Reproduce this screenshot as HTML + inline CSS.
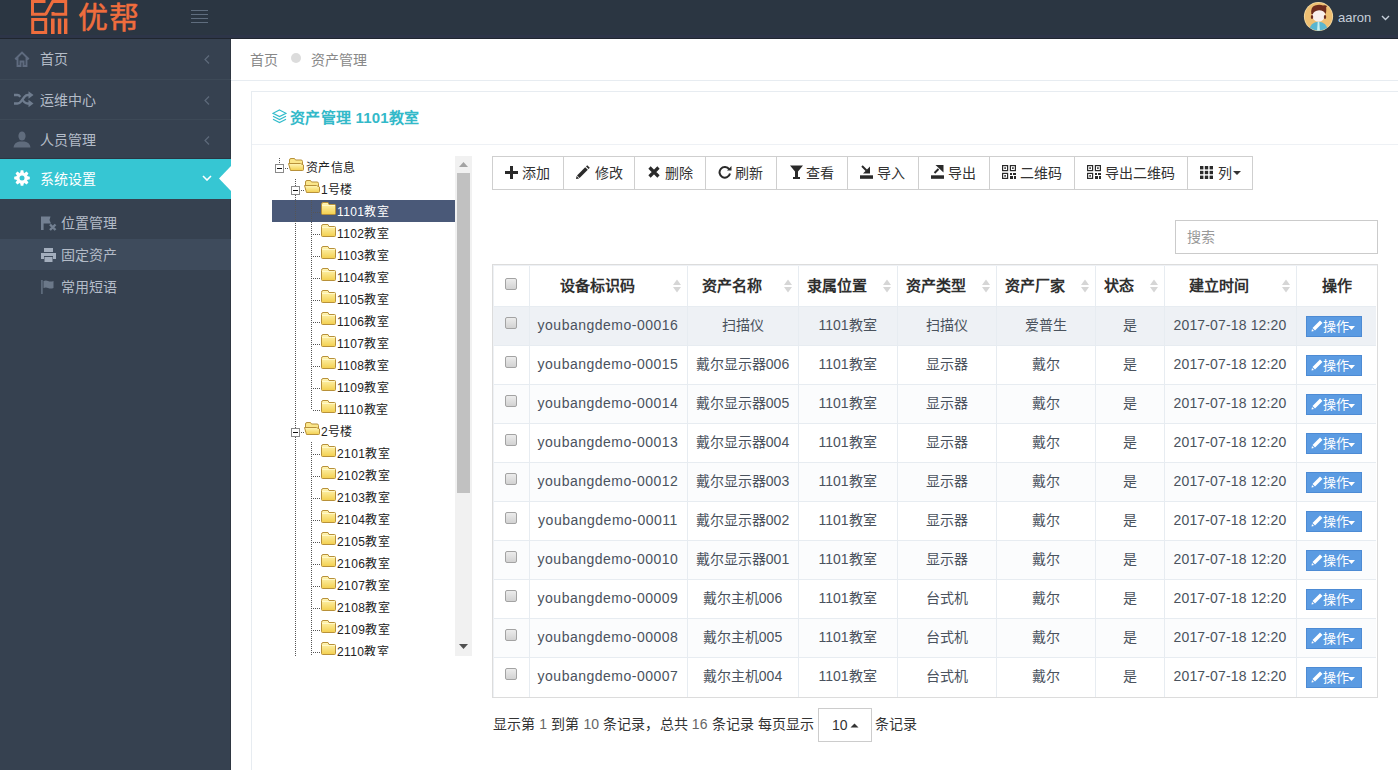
<!DOCTYPE html>
<html lang="zh-CN">
<head>
<meta charset="utf-8">
<style>
*{box-sizing:border-box;margin:0;padding:0}
html,body{width:1398px;height:770px;overflow:hidden;background:#fff}
body{font-family:"Liberation Sans",sans-serif;font-size:14px;font-weight:350;color:#333;position:relative}
.a{position:absolute}
#hdr{left:0;top:0;width:1398px;height:39px;background:linear-gradient(to bottom,#2b3642 0,#2b3642 35px,#2d3548 35px,#2d3548 38px,#20262f 38px)}
#side{left:0;top:39px;width:231px;height:731px;background:#364150}
.mi{position:absolute;left:0;width:231px;height:40px;border-top:1px solid #3d4957;color:#b4bcc8;font-size:14px;line-height:40px}
.mi .t{position:absolute;left:40px;top:0}
.mi svg{position:absolute;left:14px;top:12px}
.mi .arr{position:absolute;left:203px;top:16px}
.sub{position:absolute;left:0;width:231px;height:32px;color:#b4bcc8;line-height:32px;font-size:14px}
.sub .t{position:absolute;left:61px;top:0}
.sub svg{position:absolute;left:41px;top:9px}
/* content */
.bc{color:#888;font-size:14px;line-height:20px}
.tree{font-size:12px;color:#222;line-height:22px;font-weight:400}
.tn{position:absolute;height:22px;white-space:nowrap}
.tb{position:absolute;top:156px;height:34px;border:1px solid #ccc;border-left:none;background:#fff;font-size:14px;color:#333;line-height:32px;white-space:nowrap}
.tb svg{position:absolute;top:9px}
.tb .t{position:absolute;top:0}
table{border-collapse:collapse;table-layout:fixed;font-size:14px;color:#3b4350}
td,th{border:1px solid #e7ecf1;text-align:center;white-space:nowrap;overflow:hidden}
th{height:41px;font-weight:bold;color:#222;position:relative}
td{height:39px}
.cb{display:inline-block;width:12px;height:12px;border:1px solid #b3b3b3;border-radius:2px;background:linear-gradient(#f0f0f0,#dcdcdc)}
.op{position:absolute;width:56px;height:21px;background:#5a9ae2;border:1px solid #4a87cf;color:#fff;font-size:13px;line-height:19px}
</style>
</head>
<body>
<div id="hdr" class="a">
  <!-- logo -->
  <svg class="a" style="left:29px;top:0" width="42" height="36" viewBox="29 0 42 36">
    <g fill="none" stroke="#ef6d3d" stroke-width="3">
      <path d="M45.5 1.5H32.5V14.3H46"/>
      <path d="M45.5 14.8L53.5 0"/>
      <path d="M53 1.5H65.7V14.3H53V12"/>
      <rect x="32.7" y="19.5" width="13" height="13"/>
    </g>
    <g fill="#ef6d3d">
      <rect x="51" y="18.5" width="3.6" height="15.5"/>
      <rect x="57.8" y="18.5" width="3.5" height="15.5"/>
      <rect x="64" y="18.5" width="3.4" height="15.5"/>
    </g>
  </svg>
  <div class="a" style="left:78px;top:-1px;font-size:30px;line-height:38px;color:#ef6d3d;letter-spacing:1px;font-weight:400;-webkit-text-stroke:0.5px #ef6d3d">优帮</div>
  <div class="a" style="left:191px;top:10px;width:17px;height:1px;background:#5f6d7e"></div>
  <div class="a" style="left:191px;top:14px;width:17px;height:1px;background:#5f6d7e"></div>
  <div class="a" style="left:191px;top:18px;width:17px;height:1px;background:#5f6d7e"></div>
  <div class="a" style="left:191px;top:22px;width:17px;height:1px;background:#5f6d7e"></div>
  <!-- avatar -->
  <svg class="a" style="left:1303px;top:1px" width="31" height="31" viewBox="0 0 31 31"><defs><clipPath id="cc"><circle cx="15.5" cy="15.5" r="14"/></clipPath></defs><circle cx="15.5" cy="15.5" r="14.6" fill="#f3dba6"/><circle cx="15.5" cy="15.5" r="13.8" fill="#eebf72"/><g clip-path="url(#cc)"><path d="M6 31Q6.5 21.5 15.5 20.5Q24.5 21.5 25 31Z" fill="#5ab6d0"/><path d="M14.7 21H16.3L17 31H14Z" fill="#c9f1f2"/><ellipse cx="15.5" cy="13.8" rx="6.6" ry="7" fill="#f9efed"/><ellipse cx="9" cy="16" rx="1.2" ry="1.9" fill="#6e2c1d"/><ellipse cx="22" cy="16" rx="1.2" ry="1.9" fill="#6e2c1d"/><path d="M8.3 13Q7.5 6 12 4.6Q16 3.2 20 4.4Q23 3.8 24 5.2Q22.6 6.2 23.3 8Q23.4 11 22.6 13Q21 9.2 16 9.2Q11 9.6 9.6 13.5Z" fill="#6e2c1d"/></g></svg>
  <div class="a" style="left:1338px;top:9px;font-size:13px;line-height:17px;color:#c6cfda">aaron</div>
  <svg class="a" style="left:1381px;top:15px" width="9" height="6" viewBox="0 0 9 6"><path d="M1 1L4.5 4.5L8 1" fill="none" stroke="#c6cfda" stroke-width="1.4"/></svg>
</div>

<div id="side" class="a">
  <div class="a" style="left:230px;top:0;width:1px;height:731px;background:#2f3742"></div>
  <div class="mi" style="top:0;border-top:none">
    <svg width="16" height="16" viewBox="0 0 16 16"><path d="M1.2 8.2L8 1.5L14.8 8.2M3.5 6.5V15H6.5V10.5H9.5V15H12.5V6.5" fill="none" stroke="#5f6b7f" stroke-width="1.9"/></svg>
    <div class="t">首页</div>
    <svg class="arr" width="6" height="9" viewBox="0 0 6 9" style="left:204px;top:16px"><path d="M5 0.5L1 4.5L5 8.5" fill="none" stroke="#5e6a7b" stroke-width="1.2"/></svg>
  </div>
  <div class="mi" style="top:40px">
    <svg width="21" height="17" viewBox="0 0 21 17" style="top:11px;left:13px"><g fill="none" stroke="#6f7c8e" stroke-width="2.3"><path d="M1 4H4.5Q6 4 7.3 5.8"/><path d="M1 12.5H4.5Q6.5 12.5 8 10.5L11.5 5.8Q13 4 15 4H16.5"/><path d="M9.6 8.8L11 10.8Q12.5 12.5 14.5 12.5H16.5"/></g><g fill="#6f7c8e"><path d="M15.5 0.3L20.5 4L15.5 7.7Z"/><path d="M15.5 8.8L20.5 12.5L15.5 16.2Z"/></g></svg>
    <div class="t">运维中心</div>
    <svg class="arr" width="6" height="9" viewBox="0 0 6 9" style="left:204px;top:16px"><path d="M5 0.5L1 4.5L5 8.5" fill="none" stroke="#5e6a7b" stroke-width="1.2"/></svg>
  </div>
  <div class="mi" style="top:80px">
    <svg width="18" height="17" viewBox="0 0 18 17" style="left:13px;top:11px"><ellipse cx="9" cy="5" rx="3.6" ry="4.6" fill="#606c7d"/><path d="M0.5 16.5Q1 11.5 6.5 10.5H11.5Q17 11.5 17.5 16.5Z" fill="#606c7d"/></svg>
    <div class="t">人员管理</div>
    <svg class="arr" width="6" height="9" viewBox="0 0 6 9" style="left:204px;top:16px"><path d="M5 0.5L1 4.5L5 8.5" fill="none" stroke="#5e6a7b" stroke-width="1.2"/></svg>
  </div>
  <div class="mi" style="top:119px;height:41px;line-height:40px;background:#36c6d3;color:#fff;border-top:1px solid #2b3643">
    <svg width="16" height="16" viewBox="0 0 16 16" style="top:11px"><g fill="#fff"><circle cx="8" cy="8" r="5.6"/><path d="M6.7 0.2H9.3L9.9 3.2H6.1Z" transform="rotate(0 8 8)"/><path d="M6.7 0.2H9.3L9.9 3.2H6.1Z" transform="rotate(45 8 8)"/><path d="M6.7 0.2H9.3L9.9 3.2H6.1Z" transform="rotate(90 8 8)"/><path d="M6.7 0.2H9.3L9.9 3.2H6.1Z" transform="rotate(135 8 8)"/><path d="M6.7 0.2H9.3L9.9 3.2H6.1Z" transform="rotate(180 8 8)"/><path d="M6.7 0.2H9.3L9.9 3.2H6.1Z" transform="rotate(225 8 8)"/><path d="M6.7 0.2H9.3L9.9 3.2H6.1Z" transform="rotate(270 8 8)"/><path d="M6.7 0.2H9.3L9.9 3.2H6.1Z" transform="rotate(315 8 8)"/></g><circle cx="8" cy="8" r="2.5" fill="#36c6d3"/></svg>
    <div class="t">系统设置</div>
    <svg class="arr" width="10" height="6" viewBox="0 0 10 6" style="left:202px;top:16px"><path d="M1 1L5 5L9 1" fill="none" stroke="#fff" stroke-width="1.6"/></svg>
    <svg class="a" style="left:219px;top:7px" width="12" height="25" viewBox="0 0 12 25"><path d="M12 0L0 12.5L12 25Z" fill="#fff"/></svg>
  </div>
  <div class="sub" style="top:168px">
    <svg width="16" height="15" viewBox="0 0 16 15" style="top:9px"><path d="M0 0.5H2.6V14H0ZM2.6 0.5H9.5L8.5 4L10 7.5H2.6Z" fill="#738092"/><path d="M9 8.5L14.5 14M14.5 8.5L9 14" stroke="#738092" stroke-width="2.4"/></svg>
    <div class="t">位置管理</div>
  </div>
  <div class="sub" style="top:200px;height:31px;background:#3e4b5c">
    <svg width="15" height="14" viewBox="0 0 15 14" style="top:9px"><path d="M3 0H12V4H3Z" fill="#a3aebd"/><path d="M0 5H15V11H12V8H3V11H0Z" fill="#a3aebd"/><path d="M3.5 9H11.5V14H3.5Z" fill="#a3aebd"/></svg>
    <div class="t">固定资产</div>
  </div>
  <div class="sub" style="top:232px">
    <svg width="14" height="14" viewBox="0 0 14 14" style="top:9px"><rect x="0" y="0" width="1.8" height="14" fill="#5d6a7b"/><path d="M2.5 1Q5 0 7 1Q9.5 2 12.5 1V8Q9.5 9 7 8Q5 7 2.5 8Z" fill="#6b7889"/></svg>
    <div class="t">常用短语</div>
  </div>
</div>

<!-- content area -->
<div class="a" style="left:231px;top:39px;width:1167px;height:731px;background:#fff"></div>
<div class="a bc" style="left:250px;top:50px">首页</div>
<div class="a" style="left:291px;top:53px;width:10px;height:10px;border-radius:50%;background:#dcdcdc"></div>
<div class="a bc" style="left:311px;top:50px">资产管理</div>
<div class="a" style="left:231px;top:80px;width:1167px;height:1px;background:#e7ecf1"></div>

<!-- portlet -->
<div class="a" style="left:251px;top:91px;width:1160px;height:700px;border:1px solid #e7ecf1"></div>
<div class="a" style="left:252px;top:144px;width:1146px;height:1px;background:#eef1f5"></div>
<svg class="a" style="left:272px;top:109px" width="15" height="15" viewBox="0 0 15 15"><g fill="none" stroke="#33bccb" stroke-width="1.2"><path d="M7.5 1L14 4.3L7.5 7.6L1 4.3Z"/><path d="M1 7.3L7.5 10.6L14 7.3"/><path d="M1 10.3L7.5 13.6L14 10.3"/></g></svg>
<div class="a" style="left:290px;top:106.5px;font-size:15px;line-height:22px;font-weight:bold;color:#33b9c9;letter-spacing:0.25px">资产管理 1101教室</div>

<!-- tree -->
<svg width="0" height="0" style="position:absolute"><defs><linearGradient id="fg" x1="0" y1="0" x2="0" y2="1"><stop offset="0" stop-color="#fff6b8"/><stop offset="1" stop-color="#f3cf4e"/></linearGradient><symbol id="fc" viewBox="0 0 15 13"><path d="M0.5 2.5V11.5Q0.5 12.5 1.5 12.5H13.5Q14.5 12.5 14.5 11.5V3.5Q14.5 2.5 13.5 2.5H8L7 0.5H2Q0.5 0.5 0.5 2.5Z" fill="url(#fg)" stroke="#b8913a" stroke-width="1"/><path d="M1 3.5H14" stroke="#fff8c8" stroke-width="1"/></symbol><symbol id="fo" viewBox="0 0 16 13"><path d="M1.5 10V2Q1.5 0.5 3 0.5H6.5L7.5 2H13Q14.5 2 14.5 3.5V11" fill="#fbe68a" stroke="#b8913a" stroke-width="1"/><path d="M0.5 5.5H12.5L15.5 7V11.5Q15.5 12.5 14.5 12.5H2.5Z" fill="url(#fg)" stroke="#b8913a" stroke-width="1"/></symbol></defs></svg>
<div class="a" style="left:272px;top:200px;width:183px;height:22px;background:#4a5978"></div>
<div class="a" style="left:279px;top:158px;width:1px;height:6px;background:repeating-linear-gradient(to bottom,#555 0 1px,transparent 1px 2px)"></div>
<div class="a" style="left:295px;top:179px;width:1px;height:477px;background:repeating-linear-gradient(to bottom,#555 0 1px,transparent 1px 2px)"></div>
<div class="a" style="left:311px;top:200px;width:1px;height:210px;background:repeating-linear-gradient(to bottom,#555 0 1px,transparent 1px 2px)"></div>
<div class="a" style="left:311px;top:442px;width:1px;height:214px;background:repeating-linear-gradient(to bottom,#555 0 1px,transparent 1px 2px)"></div>
<div class="a" style="left:275px;top:164px;width:9px;height:9px;border:1px solid #8a8a8a;background:#fff"></div>
<div class="a" style="left:277px;top:168px;width:5px;height:1px;background:#111"></div>
<div class="a" style="left:285px;top:168px;width:4px;height:1px;background:repeating-linear-gradient(to right,#555 0 1px,transparent 1px 2px)"></div>
<svg class="a" style="left:288px;top:158px" width="16" height="13"><use href="#fo"/></svg>
<div class="a tree" style="left:306px;top:157px;color:#222;white-space:nowrap;letter-spacing:0.4px">资产信息</div>
<div class="a" style="left:291px;top:186px;width:9px;height:9px;border:1px solid #8a8a8a;background:#fff"></div>
<div class="a" style="left:293px;top:190px;width:5px;height:1px;background:#111"></div>
<div class="a" style="left:301px;top:190px;width:4px;height:1px;background:repeating-linear-gradient(to right,#555 0 1px,transparent 1px 2px)"></div>
<svg class="a" style="left:304px;top:180px" width="16" height="13"><use href="#fo"/></svg>
<div class="a tree" style="left:321px;top:179px;color:#222;white-space:nowrap;letter-spacing:0.4px">1号楼</div>
<div class="a" style="left:313px;top:212px;width:8px;height:1px;background:repeating-linear-gradient(to right,#555 0 1px,transparent 1px 2px)"></div>
<svg class="a" style="left:321px;top:202px" width="15" height="13"><use href="#fc"/></svg>
<div class="a tree" style="left:337px;top:201px;color:#fff;white-space:nowrap;letter-spacing:0.4px">1101教室</div>
<div class="a" style="left:313px;top:234px;width:8px;height:1px;background:repeating-linear-gradient(to right,#555 0 1px,transparent 1px 2px)"></div>
<svg class="a" style="left:321px;top:224px" width="15" height="13"><use href="#fc"/></svg>
<div class="a tree" style="left:337px;top:223px;color:#222;white-space:nowrap;letter-spacing:0.4px">1102教室</div>
<div class="a" style="left:313px;top:256px;width:8px;height:1px;background:repeating-linear-gradient(to right,#555 0 1px,transparent 1px 2px)"></div>
<svg class="a" style="left:321px;top:246px" width="15" height="13"><use href="#fc"/></svg>
<div class="a tree" style="left:337px;top:245px;color:#222;white-space:nowrap;letter-spacing:0.4px">1103教室</div>
<div class="a" style="left:313px;top:278px;width:8px;height:1px;background:repeating-linear-gradient(to right,#555 0 1px,transparent 1px 2px)"></div>
<svg class="a" style="left:321px;top:268px" width="15" height="13"><use href="#fc"/></svg>
<div class="a tree" style="left:337px;top:267px;color:#222;white-space:nowrap;letter-spacing:0.4px">1104教室</div>
<div class="a" style="left:313px;top:300px;width:8px;height:1px;background:repeating-linear-gradient(to right,#555 0 1px,transparent 1px 2px)"></div>
<svg class="a" style="left:321px;top:290px" width="15" height="13"><use href="#fc"/></svg>
<div class="a tree" style="left:337px;top:289px;color:#222;white-space:nowrap;letter-spacing:0.4px">1105教室</div>
<div class="a" style="left:313px;top:322px;width:8px;height:1px;background:repeating-linear-gradient(to right,#555 0 1px,transparent 1px 2px)"></div>
<svg class="a" style="left:321px;top:312px" width="15" height="13"><use href="#fc"/></svg>
<div class="a tree" style="left:337px;top:311px;color:#222;white-space:nowrap;letter-spacing:0.4px">1106教室</div>
<div class="a" style="left:313px;top:344px;width:8px;height:1px;background:repeating-linear-gradient(to right,#555 0 1px,transparent 1px 2px)"></div>
<svg class="a" style="left:321px;top:334px" width="15" height="13"><use href="#fc"/></svg>
<div class="a tree" style="left:337px;top:333px;color:#222;white-space:nowrap;letter-spacing:0.4px">1107教室</div>
<div class="a" style="left:313px;top:366px;width:8px;height:1px;background:repeating-linear-gradient(to right,#555 0 1px,transparent 1px 2px)"></div>
<svg class="a" style="left:321px;top:356px" width="15" height="13"><use href="#fc"/></svg>
<div class="a tree" style="left:337px;top:355px;color:#222;white-space:nowrap;letter-spacing:0.4px">1108教室</div>
<div class="a" style="left:313px;top:388px;width:8px;height:1px;background:repeating-linear-gradient(to right,#555 0 1px,transparent 1px 2px)"></div>
<svg class="a" style="left:321px;top:378px" width="15" height="13"><use href="#fc"/></svg>
<div class="a tree" style="left:337px;top:377px;color:#222;white-space:nowrap;letter-spacing:0.4px">1109教室</div>
<div class="a" style="left:313px;top:410px;width:8px;height:1px;background:repeating-linear-gradient(to right,#555 0 1px,transparent 1px 2px)"></div>
<svg class="a" style="left:321px;top:400px" width="15" height="13"><use href="#fc"/></svg>
<div class="a tree" style="left:337px;top:399px;color:#222;white-space:nowrap;letter-spacing:0.4px">1110教室</div>
<div class="a" style="left:291px;top:428px;width:9px;height:9px;border:1px solid #8a8a8a;background:#fff"></div>
<div class="a" style="left:293px;top:432px;width:5px;height:1px;background:#111"></div>
<div class="a" style="left:301px;top:432px;width:4px;height:1px;background:repeating-linear-gradient(to right,#555 0 1px,transparent 1px 2px)"></div>
<svg class="a" style="left:304px;top:422px" width="16" height="13"><use href="#fo"/></svg>
<div class="a tree" style="left:321px;top:421px;color:#222;white-space:nowrap;letter-spacing:0.4px">2号楼</div>
<div class="a" style="left:313px;top:454px;width:8px;height:1px;background:repeating-linear-gradient(to right,#555 0 1px,transparent 1px 2px)"></div>
<svg class="a" style="left:321px;top:444px" width="15" height="13"><use href="#fc"/></svg>
<div class="a tree" style="left:337px;top:443px;color:#222;white-space:nowrap;letter-spacing:0.4px">2101教室</div>
<div class="a" style="left:313px;top:476px;width:8px;height:1px;background:repeating-linear-gradient(to right,#555 0 1px,transparent 1px 2px)"></div>
<svg class="a" style="left:321px;top:466px" width="15" height="13"><use href="#fc"/></svg>
<div class="a tree" style="left:337px;top:465px;color:#222;white-space:nowrap;letter-spacing:0.4px">2102教室</div>
<div class="a" style="left:313px;top:498px;width:8px;height:1px;background:repeating-linear-gradient(to right,#555 0 1px,transparent 1px 2px)"></div>
<svg class="a" style="left:321px;top:488px" width="15" height="13"><use href="#fc"/></svg>
<div class="a tree" style="left:337px;top:487px;color:#222;white-space:nowrap;letter-spacing:0.4px">2103教室</div>
<div class="a" style="left:313px;top:520px;width:8px;height:1px;background:repeating-linear-gradient(to right,#555 0 1px,transparent 1px 2px)"></div>
<svg class="a" style="left:321px;top:510px" width="15" height="13"><use href="#fc"/></svg>
<div class="a tree" style="left:337px;top:509px;color:#222;white-space:nowrap;letter-spacing:0.4px">2104教室</div>
<div class="a" style="left:313px;top:542px;width:8px;height:1px;background:repeating-linear-gradient(to right,#555 0 1px,transparent 1px 2px)"></div>
<svg class="a" style="left:321px;top:532px" width="15" height="13"><use href="#fc"/></svg>
<div class="a tree" style="left:337px;top:531px;color:#222;white-space:nowrap;letter-spacing:0.4px">2105教室</div>
<div class="a" style="left:313px;top:564px;width:8px;height:1px;background:repeating-linear-gradient(to right,#555 0 1px,transparent 1px 2px)"></div>
<svg class="a" style="left:321px;top:554px" width="15" height="13"><use href="#fc"/></svg>
<div class="a tree" style="left:337px;top:553px;color:#222;white-space:nowrap;letter-spacing:0.4px">2106教室</div>
<div class="a" style="left:313px;top:586px;width:8px;height:1px;background:repeating-linear-gradient(to right,#555 0 1px,transparent 1px 2px)"></div>
<svg class="a" style="left:321px;top:576px" width="15" height="13"><use href="#fc"/></svg>
<div class="a tree" style="left:337px;top:575px;color:#222;white-space:nowrap;letter-spacing:0.4px">2107教室</div>
<div class="a" style="left:313px;top:608px;width:8px;height:1px;background:repeating-linear-gradient(to right,#555 0 1px,transparent 1px 2px)"></div>
<svg class="a" style="left:321px;top:598px" width="15" height="13"><use href="#fc"/></svg>
<div class="a tree" style="left:337px;top:597px;color:#222;white-space:nowrap;letter-spacing:0.4px">2108教室</div>
<div class="a" style="left:313px;top:630px;width:8px;height:1px;background:repeating-linear-gradient(to right,#555 0 1px,transparent 1px 2px)"></div>
<svg class="a" style="left:321px;top:620px" width="15" height="13"><use href="#fc"/></svg>
<div class="a tree" style="left:337px;top:619px;color:#222;white-space:nowrap;letter-spacing:0.4px">2109教室</div>
<div class="a" style="left:313px;top:652px;width:8px;height:1px;background:repeating-linear-gradient(to right,#555 0 1px,transparent 1px 2px)"></div>
<svg class="a" style="left:321px;top:642px" width="15" height="13"><use href="#fc"/></svg>
<div class="a tree" style="left:337px;top:641px;color:#222;white-space:nowrap;letter-spacing:0.4px">2110教室</div>
<div class="a" style="left:455px;top:156px;width:17px;height:500px;background:#f1f1f1"></div>
<div class="a" style="left:457px;top:173px;width:13px;height:320px;background:#c1c1c1"></div>
<svg class="a" style="left:459px;top:162px" width="9" height="5"><path d="M0 5L4.5 0L9 5Z" fill="#a3a3a3"/></svg>
<svg class="a" style="left:459px;top:644px" width="9" height="5"><path d="M0 0L4.5 5L9 0Z" fill="#505050"/></svg>
<div class="a" style="left:260px;top:656px;width:220px;height:40px;background:#fff"></div>

<!-- toolbar -->
<div class="a" style="left:492px;top:156px;width:761px;height:34px;border:1px solid #cfcfcf"></div>
<div class="a" style="left:563px;top:157px;width:1px;height:32px;background:#cfcfcf"></div>
<svg class="a" style="left:505px;top:166px" width="13" height="13" viewBox="0 0 13 13"><path d="M5 0H8V5H13V8H8V13H5V8H0V5H5Z" fill="#2a2a2a"/></svg>
<div class="a" style="left:522px;top:163px;font-size:14px;line-height:20px;color:#333;white-space:nowrap">添加</div>
<div class="a" style="left:634px;top:157px;width:1px;height:32px;background:#cfcfcf"></div>
<svg class="a" style="left:576px;top:165px" width="14" height="14" viewBox="0 0 14 14"><path d="M11.2 0.2L13.8 2.8L12.6 4L10 1.4Z" fill="#2a2a2a"/><path d="M9.2 2.2L11.8 4.8L3.6 13L1 10.4Z" fill="#2a2a2a"/><path d="M0.6 10.9L3.1 13.4L0 14Z" fill="#2a2a2a"/></svg>
<div class="a" style="left:595px;top:163px;font-size:14px;line-height:20px;color:#333;white-space:nowrap">修改</div>
<div class="a" style="left:705px;top:157px;width:1px;height:32px;background:#cfcfcf"></div>
<svg class="a" style="left:648px;top:166px" width="12" height="12" viewBox="0 0 12 12"><path d="M1.5 1.5L10.5 10.5M10.5 1.5L1.5 10.5" stroke="#2a2a2a" stroke-width="3.2"/></svg>
<div class="a" style="left:665px;top:163px;font-size:14px;line-height:20px;color:#333;white-space:nowrap">删除</div>
<div class="a" style="left:776px;top:157px;width:1px;height:32px;background:#cfcfcf"></div>
<svg class="a" style="left:718px;top:165px" width="14" height="14" viewBox="0 0 14 14"><path d="M11.2 4.3A5.3 5.3 0 1 0 12 8.5" fill="none" stroke="#2a2a2a" stroke-width="2"/><path d="M9 5.5H13.5V1Z" fill="#2a2a2a"/></svg>
<div class="a" style="left:735px;top:163px;font-size:14px;line-height:20px;color:#333;white-space:nowrap">刷新</div>
<div class="a" style="left:847px;top:157px;width:1px;height:32px;background:#cfcfcf"></div>
<svg class="a" style="left:790px;top:165px" width="13" height="14" viewBox="0 0 13 14"><path d="M0 0.5H13L8 6.5V12H5V6.5Z" fill="#2a2a2a"/><rect x="3" y="12" width="7" height="2" fill="#2a2a2a"/></svg>
<div class="a" style="left:806px;top:163px;font-size:14px;line-height:20px;color:#333;white-space:nowrap">查看</div>
<div class="a" style="left:918px;top:157px;width:1px;height:32px;background:#cfcfcf"></div>
<svg class="a" style="left:860px;top:164px" width="14" height="16" viewBox="0 0 14 16"><path d="M0 11.3H13V14.8H0Z" fill="#2a2a2a"/><path d="M2 2L6.5 6.5" stroke="#2a2a2a" stroke-width="2"/><path d="M10 2.5V9.5H3Z" fill="#2a2a2a"/></svg>
<div class="a" style="left:877px;top:163px;font-size:14px;line-height:20px;color:#333;white-space:nowrap">导入</div>
<div class="a" style="left:989px;top:157px;width:1px;height:32px;background:#cfcfcf"></div>
<svg class="a" style="left:931px;top:164px" width="14" height="16" viewBox="0 0 14 16"><path d="M0 11.3H13V14.8H0Z" fill="#2a2a2a"/><path d="M3.5 9L7.5 5" stroke="#2a2a2a" stroke-width="2"/><path d="M4.5 1H12.5V8.5Z" fill="#2a2a2a"/></svg>
<div class="a" style="left:948px;top:163px;font-size:14px;line-height:20px;color:#333;white-space:nowrap">导出</div>
<div class="a" style="left:1074px;top:157px;width:1px;height:32px;background:#cfcfcf"></div>
<svg class="a" style="left:1002px;top:165px" width="14" height="14" viewBox="0 0 14 14"><g fill="none" stroke="#2a2a2a" stroke-width="1.2"><rect x="0.6" y="0.6" width="5" height="5"/><rect x="8.4" y="0.6" width="5" height="5"/><rect x="0.6" y="8.4" width="5" height="5"/></g><g fill="#2a2a2a"><rect x="2.3" y="2.3" width="1.6" height="1.6"/><rect x="10.1" y="2.3" width="1.6" height="1.6"/><rect x="2.3" y="10.1" width="1.6" height="1.6"/><rect x="8" y="8" width="2" height="2"/><rect x="11" y="8" width="3" height="2"/><rect x="8" y="11" width="3" height="3"/><rect x="12" y="11" width="2" height="3"/></g></svg>
<div class="a" style="left:1020px;top:163px;font-size:14px;line-height:20px;color:#333;white-space:nowrap">二维码</div>
<div class="a" style="left:1187px;top:157px;width:1px;height:32px;background:#cfcfcf"></div>
<svg class="a" style="left:1087px;top:165px" width="14" height="14" viewBox="0 0 14 14"><g fill="none" stroke="#2a2a2a" stroke-width="1.2"><rect x="0.6" y="0.6" width="5" height="5"/><rect x="8.4" y="0.6" width="5" height="5"/><rect x="0.6" y="8.4" width="5" height="5"/></g><g fill="#2a2a2a"><rect x="2.3" y="2.3" width="1.6" height="1.6"/><rect x="10.1" y="2.3" width="1.6" height="1.6"/><rect x="2.3" y="10.1" width="1.6" height="1.6"/><rect x="8" y="8" width="2" height="2"/><rect x="11" y="8" width="3" height="2"/><rect x="8" y="11" width="3" height="3"/><rect x="12" y="11" width="2" height="3"/></g></svg>
<div class="a" style="left:1105px;top:163px;font-size:14px;line-height:20px;color:#333;white-space:nowrap">导出二维码</div>
<svg class="a" style="left:1200px;top:166px" width="13" height="13" viewBox="0 0 13 13"><g fill="#2a2a2a"><rect x="0" y="0" width="3.4" height="3.4"/><rect x="4.8" y="0" width="3.4" height="3.4"/><rect x="9.6" y="0" width="3.4" height="3.4"/><rect x="0" y="4.8" width="3.4" height="3.4"/><rect x="4.8" y="4.8" width="3.4" height="3.4"/><rect x="9.6" y="4.8" width="3.4" height="3.4"/><rect x="0" y="9.6" width="3.4" height="3.4"/><rect x="4.8" y="9.6" width="3.4" height="3.4"/><rect x="9.6" y="9.6" width="3.4" height="3.4"/></g></svg>
<div class="a" style="left:1218px;top:163px;font-size:14px;line-height:20px;color:#333;white-space:nowrap">列</div>
<svg class="a" style="left:1233px;top:171px" width="8" height="4" viewBox="0 0 8 4"><path d="M0 0H8L4 4Z" fill="#333"/></svg>

<!-- search -->
<div class="a" style="left:1175px;top:220px;width:203px;height:34px;border:1px solid #cbcbcb;font-size:14px;color:#999;line-height:32px;padding-left:11px">搜索</div>

<!-- table -->
<div class="a" style="left:493px;top:306px;width:883px;height:39px;background:#eef1f5"></div>
<div class="a" style="left:493px;top:345px;width:883px;height:39px;background:#ffffff"></div>
<div class="a" style="left:493px;top:384px;width:883px;height:39px;background:#fbfcfd"></div>
<div class="a" style="left:493px;top:423px;width:883px;height:39px;background:#ffffff"></div>
<div class="a" style="left:493px;top:462px;width:883px;height:39px;background:#fbfcfd"></div>
<div class="a" style="left:493px;top:501px;width:883px;height:39px;background:#ffffff"></div>
<div class="a" style="left:493px;top:540px;width:883px;height:39px;background:#fbfcfd"></div>
<div class="a" style="left:493px;top:579px;width:883px;height:39px;background:#ffffff"></div>
<div class="a" style="left:493px;top:618px;width:883px;height:39px;background:#fbfcfd"></div>
<div class="a" style="left:493px;top:657px;width:883px;height:39px;background:#ffffff"></div>
<div class="a" style="left:493px;top:306px;width:883px;height:1px;background:#e7ecf1"></div>
<div class="a" style="left:493px;top:345px;width:883px;height:1px;background:#e7ecf1"></div>
<div class="a" style="left:493px;top:384px;width:883px;height:1px;background:#e7ecf1"></div>
<div class="a" style="left:493px;top:423px;width:883px;height:1px;background:#e7ecf1"></div>
<div class="a" style="left:493px;top:462px;width:883px;height:1px;background:#e7ecf1"></div>
<div class="a" style="left:493px;top:501px;width:883px;height:1px;background:#e7ecf1"></div>
<div class="a" style="left:493px;top:540px;width:883px;height:1px;background:#e7ecf1"></div>
<div class="a" style="left:493px;top:579px;width:883px;height:1px;background:#e7ecf1"></div>
<div class="a" style="left:493px;top:618px;width:883px;height:1px;background:#e7ecf1"></div>
<div class="a" style="left:493px;top:657px;width:883px;height:1px;background:#e7ecf1"></div>
<div class="a" style="left:529px;top:265px;width:1px;height:432px;background:#e7ecf1"></div>
<div class="a" style="left:687px;top:265px;width:1px;height:432px;background:#e7ecf1"></div>
<div class="a" style="left:798px;top:265px;width:1px;height:432px;background:#e7ecf1"></div>
<div class="a" style="left:897px;top:265px;width:1px;height:432px;background:#e7ecf1"></div>
<div class="a" style="left:996px;top:265px;width:1px;height:432px;background:#e7ecf1"></div>
<div class="a" style="left:1095px;top:265px;width:1px;height:432px;background:#e7ecf1"></div>
<div class="a" style="left:1164px;top:265px;width:1px;height:432px;background:#e7ecf1"></div>
<div class="a" style="left:1296px;top:265px;width:1px;height:432px;background:#e7ecf1"></div>
<div class="a" style="left:492px;top:264px;width:886px;height:434px;border:1px solid #dcdcdc"></div>
<div class="a" style="left:493px;top:265px;width:884px;height:432px;border:1px solid #eef1f5;border-right:none;border-bottom:none"></div>
<div class="a" style="left:505px;top:278px;width:12px;height:12px;border:1px solid #a3a3a3;border-radius:2px;background:linear-gradient(#ececec,#d2d2d2)"></div>
<svg class="a" style="left:673px;top:279px" width="8" height="14" viewBox="0 0 8 14"><path d="M0 6L4 0.5L8 6Z M0 8L4 13.5L8 8Z" fill="#d6d6d6"/></svg>
<div class="a" style="left:497.0px;top:276px;width:200px;text-align:center;font-size:15px;line-height:20px;font-weight:bold;color:#2f2f2f">设备标识码</div>
<svg class="a" style="left:784px;top:279px" width="8" height="14" viewBox="0 0 8 14"><path d="M0 6L4 0.5L8 6Z M0 8L4 13.5L8 8Z" fill="#d6d6d6"/></svg>
<div class="a" style="left:631.5px;top:276px;width:200px;text-align:center;font-size:15px;line-height:20px;font-weight:bold;color:#2f2f2f">资产名称</div>
<svg class="a" style="left:883px;top:279px" width="8" height="14" viewBox="0 0 8 14"><path d="M0 6L4 0.5L8 6Z M0 8L4 13.5L8 8Z" fill="#d6d6d6"/></svg>
<div class="a" style="left:736.5px;top:276px;width:200px;text-align:center;font-size:15px;line-height:20px;font-weight:bold;color:#2f2f2f">隶属位置</div>
<svg class="a" style="left:982px;top:279px" width="8" height="14" viewBox="0 0 8 14"><path d="M0 6L4 0.5L8 6Z M0 8L4 13.5L8 8Z" fill="#d6d6d6"/></svg>
<div class="a" style="left:835.5px;top:276px;width:200px;text-align:center;font-size:15px;line-height:20px;font-weight:bold;color:#2f2f2f">资产类型</div>
<svg class="a" style="left:1081px;top:279px" width="8" height="14" viewBox="0 0 8 14"><path d="M0 6L4 0.5L8 6Z M0 8L4 13.5L8 8Z" fill="#d6d6d6"/></svg>
<div class="a" style="left:934.5px;top:276px;width:200px;text-align:center;font-size:15px;line-height:20px;font-weight:bold;color:#2f2f2f">资产厂家</div>
<svg class="a" style="left:1150px;top:279px" width="8" height="14" viewBox="0 0 8 14"><path d="M0 6L4 0.5L8 6Z M0 8L4 13.5L8 8Z" fill="#d6d6d6"/></svg>
<div class="a" style="left:1018.5px;top:276px;width:200px;text-align:center;font-size:15px;line-height:20px;font-weight:bold;color:#2f2f2f">状态</div>
<svg class="a" style="left:1282px;top:279px" width="8" height="14" viewBox="0 0 8 14"><path d="M0 6L4 0.5L8 6Z M0 8L4 13.5L8 8Z" fill="#d6d6d6"/></svg>
<div class="a" style="left:1119.0px;top:276px;width:200px;text-align:center;font-size:15px;line-height:20px;font-weight:bold;color:#2f2f2f">建立时间</div>
<div class="a" style="left:1237.0px;top:276px;width:200px;text-align:center;font-size:15px;line-height:20px;font-weight:bold;color:#2f2f2f">操作</div>
<div class="a" style="left:505px;top:317px;width:12px;height:12px;border:1px solid #a3a3a3;border-radius:2px;background:linear-gradient(#ececec,#d2d2d2)"></div>
<div class="a" style="left:508.0px;top:315px;width:200px;text-align:center;font-size:14px;line-height:20px;color:#4a525d;white-space:nowrap;letter-spacing:0.5px;">youbangdemo-00016</div>
<div class="a" style="left:642.5px;top:315px;width:200px;text-align:center;font-size:14px;line-height:20px;color:#4a525d;white-space:nowrap;">扫描仪</div>
<div class="a" style="left:747.5px;top:315px;width:200px;text-align:center;font-size:14px;line-height:20px;color:#4a525d;white-space:nowrap;">1101教室</div>
<div class="a" style="left:846.5px;top:315px;width:200px;text-align:center;font-size:14px;line-height:20px;color:#4a525d;white-space:nowrap;">扫描仪</div>
<div class="a" style="left:945.5px;top:315px;width:200px;text-align:center;font-size:14px;line-height:20px;color:#4a525d;white-space:nowrap;">爱普生</div>
<div class="a" style="left:1029.5px;top:315px;width:200px;text-align:center;font-size:14px;line-height:20px;color:#4a525d;white-space:nowrap;">是</div>
<div class="a" style="left:1130.0px;top:315px;width:200px;text-align:center;font-size:14px;line-height:20px;color:#4a525d;white-space:nowrap;letter-spacing:0.15px;">2017-07-18 12:20</div>
<div class="a" style="left:1306px;top:316px;width:56px;height:21px;background:#5b9be2;border:1px solid #4d8bd4"></div>
<svg class="a" style="left:1311px;top:320px" width="12" height="12" viewBox="0 0 12 12"><path d="M9 0.5L11.5 3L4 10.5L1.5 8Z" fill="#fff"/><path d="M1 9L3 11L0.5 11.5Z" fill="#fff"/></svg>
<div class="a" style="left:1323px;top:317px;font-size:13px;line-height:19px;color:#fff">操作</div>
<svg class="a" style="left:1348px;top:326px" width="7" height="4" viewBox="0 0 7 4"><path d="M0 0H7L3.5 4Z" fill="#fff"/></svg>
<div class="a" style="left:505px;top:356px;width:12px;height:12px;border:1px solid #a3a3a3;border-radius:2px;background:linear-gradient(#ececec,#d2d2d2)"></div>
<div class="a" style="left:508.0px;top:354px;width:200px;text-align:center;font-size:14px;line-height:20px;color:#4a525d;white-space:nowrap;letter-spacing:0.5px;">youbangdemo-00015</div>
<div class="a" style="left:642.5px;top:354px;width:200px;text-align:center;font-size:14px;line-height:20px;color:#4a525d;white-space:nowrap;">戴尔显示器006</div>
<div class="a" style="left:747.5px;top:354px;width:200px;text-align:center;font-size:14px;line-height:20px;color:#4a525d;white-space:nowrap;">1101教室</div>
<div class="a" style="left:846.5px;top:354px;width:200px;text-align:center;font-size:14px;line-height:20px;color:#4a525d;white-space:nowrap;">显示器</div>
<div class="a" style="left:945.5px;top:354px;width:200px;text-align:center;font-size:14px;line-height:20px;color:#4a525d;white-space:nowrap;">戴尔</div>
<div class="a" style="left:1029.5px;top:354px;width:200px;text-align:center;font-size:14px;line-height:20px;color:#4a525d;white-space:nowrap;">是</div>
<div class="a" style="left:1130.0px;top:354px;width:200px;text-align:center;font-size:14px;line-height:20px;color:#4a525d;white-space:nowrap;letter-spacing:0.15px;">2017-07-18 12:20</div>
<div class="a" style="left:1306px;top:355px;width:56px;height:21px;background:#5b9be2;border:1px solid #4d8bd4"></div>
<svg class="a" style="left:1311px;top:359px" width="12" height="12" viewBox="0 0 12 12"><path d="M9 0.5L11.5 3L4 10.5L1.5 8Z" fill="#fff"/><path d="M1 9L3 11L0.5 11.5Z" fill="#fff"/></svg>
<div class="a" style="left:1323px;top:356px;font-size:13px;line-height:19px;color:#fff">操作</div>
<svg class="a" style="left:1348px;top:365px" width="7" height="4" viewBox="0 0 7 4"><path d="M0 0H7L3.5 4Z" fill="#fff"/></svg>
<div class="a" style="left:505px;top:395px;width:12px;height:12px;border:1px solid #a3a3a3;border-radius:2px;background:linear-gradient(#ececec,#d2d2d2)"></div>
<div class="a" style="left:508.0px;top:393px;width:200px;text-align:center;font-size:14px;line-height:20px;color:#4a525d;white-space:nowrap;letter-spacing:0.5px;">youbangdemo-00014</div>
<div class="a" style="left:642.5px;top:393px;width:200px;text-align:center;font-size:14px;line-height:20px;color:#4a525d;white-space:nowrap;">戴尔显示器005</div>
<div class="a" style="left:747.5px;top:393px;width:200px;text-align:center;font-size:14px;line-height:20px;color:#4a525d;white-space:nowrap;">1101教室</div>
<div class="a" style="left:846.5px;top:393px;width:200px;text-align:center;font-size:14px;line-height:20px;color:#4a525d;white-space:nowrap;">显示器</div>
<div class="a" style="left:945.5px;top:393px;width:200px;text-align:center;font-size:14px;line-height:20px;color:#4a525d;white-space:nowrap;">戴尔</div>
<div class="a" style="left:1029.5px;top:393px;width:200px;text-align:center;font-size:14px;line-height:20px;color:#4a525d;white-space:nowrap;">是</div>
<div class="a" style="left:1130.0px;top:393px;width:200px;text-align:center;font-size:14px;line-height:20px;color:#4a525d;white-space:nowrap;letter-spacing:0.15px;">2017-07-18 12:20</div>
<div class="a" style="left:1306px;top:394px;width:56px;height:21px;background:#5b9be2;border:1px solid #4d8bd4"></div>
<svg class="a" style="left:1311px;top:398px" width="12" height="12" viewBox="0 0 12 12"><path d="M9 0.5L11.5 3L4 10.5L1.5 8Z" fill="#fff"/><path d="M1 9L3 11L0.5 11.5Z" fill="#fff"/></svg>
<div class="a" style="left:1323px;top:395px;font-size:13px;line-height:19px;color:#fff">操作</div>
<svg class="a" style="left:1348px;top:404px" width="7" height="4" viewBox="0 0 7 4"><path d="M0 0H7L3.5 4Z" fill="#fff"/></svg>
<div class="a" style="left:505px;top:434px;width:12px;height:12px;border:1px solid #a3a3a3;border-radius:2px;background:linear-gradient(#ececec,#d2d2d2)"></div>
<div class="a" style="left:508.0px;top:432px;width:200px;text-align:center;font-size:14px;line-height:20px;color:#4a525d;white-space:nowrap;letter-spacing:0.5px;">youbangdemo-00013</div>
<div class="a" style="left:642.5px;top:432px;width:200px;text-align:center;font-size:14px;line-height:20px;color:#4a525d;white-space:nowrap;">戴尔显示器004</div>
<div class="a" style="left:747.5px;top:432px;width:200px;text-align:center;font-size:14px;line-height:20px;color:#4a525d;white-space:nowrap;">1101教室</div>
<div class="a" style="left:846.5px;top:432px;width:200px;text-align:center;font-size:14px;line-height:20px;color:#4a525d;white-space:nowrap;">显示器</div>
<div class="a" style="left:945.5px;top:432px;width:200px;text-align:center;font-size:14px;line-height:20px;color:#4a525d;white-space:nowrap;">戴尔</div>
<div class="a" style="left:1029.5px;top:432px;width:200px;text-align:center;font-size:14px;line-height:20px;color:#4a525d;white-space:nowrap;">是</div>
<div class="a" style="left:1130.0px;top:432px;width:200px;text-align:center;font-size:14px;line-height:20px;color:#4a525d;white-space:nowrap;letter-spacing:0.15px;">2017-07-18 12:20</div>
<div class="a" style="left:1306px;top:433px;width:56px;height:21px;background:#5b9be2;border:1px solid #4d8bd4"></div>
<svg class="a" style="left:1311px;top:437px" width="12" height="12" viewBox="0 0 12 12"><path d="M9 0.5L11.5 3L4 10.5L1.5 8Z" fill="#fff"/><path d="M1 9L3 11L0.5 11.5Z" fill="#fff"/></svg>
<div class="a" style="left:1323px;top:434px;font-size:13px;line-height:19px;color:#fff">操作</div>
<svg class="a" style="left:1348px;top:443px" width="7" height="4" viewBox="0 0 7 4"><path d="M0 0H7L3.5 4Z" fill="#fff"/></svg>
<div class="a" style="left:505px;top:473px;width:12px;height:12px;border:1px solid #a3a3a3;border-radius:2px;background:linear-gradient(#ececec,#d2d2d2)"></div>
<div class="a" style="left:508.0px;top:471px;width:200px;text-align:center;font-size:14px;line-height:20px;color:#4a525d;white-space:nowrap;letter-spacing:0.5px;">youbangdemo-00012</div>
<div class="a" style="left:642.5px;top:471px;width:200px;text-align:center;font-size:14px;line-height:20px;color:#4a525d;white-space:nowrap;">戴尔显示器003</div>
<div class="a" style="left:747.5px;top:471px;width:200px;text-align:center;font-size:14px;line-height:20px;color:#4a525d;white-space:nowrap;">1101教室</div>
<div class="a" style="left:846.5px;top:471px;width:200px;text-align:center;font-size:14px;line-height:20px;color:#4a525d;white-space:nowrap;">显示器</div>
<div class="a" style="left:945.5px;top:471px;width:200px;text-align:center;font-size:14px;line-height:20px;color:#4a525d;white-space:nowrap;">戴尔</div>
<div class="a" style="left:1029.5px;top:471px;width:200px;text-align:center;font-size:14px;line-height:20px;color:#4a525d;white-space:nowrap;">是</div>
<div class="a" style="left:1130.0px;top:471px;width:200px;text-align:center;font-size:14px;line-height:20px;color:#4a525d;white-space:nowrap;letter-spacing:0.15px;">2017-07-18 12:20</div>
<div class="a" style="left:1306px;top:472px;width:56px;height:21px;background:#5b9be2;border:1px solid #4d8bd4"></div>
<svg class="a" style="left:1311px;top:476px" width="12" height="12" viewBox="0 0 12 12"><path d="M9 0.5L11.5 3L4 10.5L1.5 8Z" fill="#fff"/><path d="M1 9L3 11L0.5 11.5Z" fill="#fff"/></svg>
<div class="a" style="left:1323px;top:473px;font-size:13px;line-height:19px;color:#fff">操作</div>
<svg class="a" style="left:1348px;top:482px" width="7" height="4" viewBox="0 0 7 4"><path d="M0 0H7L3.5 4Z" fill="#fff"/></svg>
<div class="a" style="left:505px;top:512px;width:12px;height:12px;border:1px solid #a3a3a3;border-radius:2px;background:linear-gradient(#ececec,#d2d2d2)"></div>
<div class="a" style="left:508.0px;top:510px;width:200px;text-align:center;font-size:14px;line-height:20px;color:#4a525d;white-space:nowrap;letter-spacing:0.5px;">youbangdemo-00011</div>
<div class="a" style="left:642.5px;top:510px;width:200px;text-align:center;font-size:14px;line-height:20px;color:#4a525d;white-space:nowrap;">戴尔显示器002</div>
<div class="a" style="left:747.5px;top:510px;width:200px;text-align:center;font-size:14px;line-height:20px;color:#4a525d;white-space:nowrap;">1101教室</div>
<div class="a" style="left:846.5px;top:510px;width:200px;text-align:center;font-size:14px;line-height:20px;color:#4a525d;white-space:nowrap;">显示器</div>
<div class="a" style="left:945.5px;top:510px;width:200px;text-align:center;font-size:14px;line-height:20px;color:#4a525d;white-space:nowrap;">戴尔</div>
<div class="a" style="left:1029.5px;top:510px;width:200px;text-align:center;font-size:14px;line-height:20px;color:#4a525d;white-space:nowrap;">是</div>
<div class="a" style="left:1130.0px;top:510px;width:200px;text-align:center;font-size:14px;line-height:20px;color:#4a525d;white-space:nowrap;letter-spacing:0.15px;">2017-07-18 12:20</div>
<div class="a" style="left:1306px;top:511px;width:56px;height:21px;background:#5b9be2;border:1px solid #4d8bd4"></div>
<svg class="a" style="left:1311px;top:515px" width="12" height="12" viewBox="0 0 12 12"><path d="M9 0.5L11.5 3L4 10.5L1.5 8Z" fill="#fff"/><path d="M1 9L3 11L0.5 11.5Z" fill="#fff"/></svg>
<div class="a" style="left:1323px;top:512px;font-size:13px;line-height:19px;color:#fff">操作</div>
<svg class="a" style="left:1348px;top:521px" width="7" height="4" viewBox="0 0 7 4"><path d="M0 0H7L3.5 4Z" fill="#fff"/></svg>
<div class="a" style="left:505px;top:551px;width:12px;height:12px;border:1px solid #a3a3a3;border-radius:2px;background:linear-gradient(#ececec,#d2d2d2)"></div>
<div class="a" style="left:508.0px;top:549px;width:200px;text-align:center;font-size:14px;line-height:20px;color:#4a525d;white-space:nowrap;letter-spacing:0.5px;">youbangdemo-00010</div>
<div class="a" style="left:642.5px;top:549px;width:200px;text-align:center;font-size:14px;line-height:20px;color:#4a525d;white-space:nowrap;">戴尔显示器001</div>
<div class="a" style="left:747.5px;top:549px;width:200px;text-align:center;font-size:14px;line-height:20px;color:#4a525d;white-space:nowrap;">1101教室</div>
<div class="a" style="left:846.5px;top:549px;width:200px;text-align:center;font-size:14px;line-height:20px;color:#4a525d;white-space:nowrap;">显示器</div>
<div class="a" style="left:945.5px;top:549px;width:200px;text-align:center;font-size:14px;line-height:20px;color:#4a525d;white-space:nowrap;">戴尔</div>
<div class="a" style="left:1029.5px;top:549px;width:200px;text-align:center;font-size:14px;line-height:20px;color:#4a525d;white-space:nowrap;">是</div>
<div class="a" style="left:1130.0px;top:549px;width:200px;text-align:center;font-size:14px;line-height:20px;color:#4a525d;white-space:nowrap;letter-spacing:0.15px;">2017-07-18 12:20</div>
<div class="a" style="left:1306px;top:550px;width:56px;height:21px;background:#5b9be2;border:1px solid #4d8bd4"></div>
<svg class="a" style="left:1311px;top:554px" width="12" height="12" viewBox="0 0 12 12"><path d="M9 0.5L11.5 3L4 10.5L1.5 8Z" fill="#fff"/><path d="M1 9L3 11L0.5 11.5Z" fill="#fff"/></svg>
<div class="a" style="left:1323px;top:551px;font-size:13px;line-height:19px;color:#fff">操作</div>
<svg class="a" style="left:1348px;top:560px" width="7" height="4" viewBox="0 0 7 4"><path d="M0 0H7L3.5 4Z" fill="#fff"/></svg>
<div class="a" style="left:505px;top:590px;width:12px;height:12px;border:1px solid #a3a3a3;border-radius:2px;background:linear-gradient(#ececec,#d2d2d2)"></div>
<div class="a" style="left:508.0px;top:588px;width:200px;text-align:center;font-size:14px;line-height:20px;color:#4a525d;white-space:nowrap;letter-spacing:0.5px;">youbangdemo-00009</div>
<div class="a" style="left:642.5px;top:588px;width:200px;text-align:center;font-size:14px;line-height:20px;color:#4a525d;white-space:nowrap;">戴尔主机006</div>
<div class="a" style="left:747.5px;top:588px;width:200px;text-align:center;font-size:14px;line-height:20px;color:#4a525d;white-space:nowrap;">1101教室</div>
<div class="a" style="left:846.5px;top:588px;width:200px;text-align:center;font-size:14px;line-height:20px;color:#4a525d;white-space:nowrap;">台式机</div>
<div class="a" style="left:945.5px;top:588px;width:200px;text-align:center;font-size:14px;line-height:20px;color:#4a525d;white-space:nowrap;">戴尔</div>
<div class="a" style="left:1029.5px;top:588px;width:200px;text-align:center;font-size:14px;line-height:20px;color:#4a525d;white-space:nowrap;">是</div>
<div class="a" style="left:1130.0px;top:588px;width:200px;text-align:center;font-size:14px;line-height:20px;color:#4a525d;white-space:nowrap;letter-spacing:0.15px;">2017-07-18 12:20</div>
<div class="a" style="left:1306px;top:589px;width:56px;height:21px;background:#5b9be2;border:1px solid #4d8bd4"></div>
<svg class="a" style="left:1311px;top:593px" width="12" height="12" viewBox="0 0 12 12"><path d="M9 0.5L11.5 3L4 10.5L1.5 8Z" fill="#fff"/><path d="M1 9L3 11L0.5 11.5Z" fill="#fff"/></svg>
<div class="a" style="left:1323px;top:590px;font-size:13px;line-height:19px;color:#fff">操作</div>
<svg class="a" style="left:1348px;top:599px" width="7" height="4" viewBox="0 0 7 4"><path d="M0 0H7L3.5 4Z" fill="#fff"/></svg>
<div class="a" style="left:505px;top:629px;width:12px;height:12px;border:1px solid #a3a3a3;border-radius:2px;background:linear-gradient(#ececec,#d2d2d2)"></div>
<div class="a" style="left:508.0px;top:627px;width:200px;text-align:center;font-size:14px;line-height:20px;color:#4a525d;white-space:nowrap;letter-spacing:0.5px;">youbangdemo-00008</div>
<div class="a" style="left:642.5px;top:627px;width:200px;text-align:center;font-size:14px;line-height:20px;color:#4a525d;white-space:nowrap;">戴尔主机005</div>
<div class="a" style="left:747.5px;top:627px;width:200px;text-align:center;font-size:14px;line-height:20px;color:#4a525d;white-space:nowrap;">1101教室</div>
<div class="a" style="left:846.5px;top:627px;width:200px;text-align:center;font-size:14px;line-height:20px;color:#4a525d;white-space:nowrap;">台式机</div>
<div class="a" style="left:945.5px;top:627px;width:200px;text-align:center;font-size:14px;line-height:20px;color:#4a525d;white-space:nowrap;">戴尔</div>
<div class="a" style="left:1029.5px;top:627px;width:200px;text-align:center;font-size:14px;line-height:20px;color:#4a525d;white-space:nowrap;">是</div>
<div class="a" style="left:1130.0px;top:627px;width:200px;text-align:center;font-size:14px;line-height:20px;color:#4a525d;white-space:nowrap;letter-spacing:0.15px;">2017-07-18 12:20</div>
<div class="a" style="left:1306px;top:628px;width:56px;height:21px;background:#5b9be2;border:1px solid #4d8bd4"></div>
<svg class="a" style="left:1311px;top:632px" width="12" height="12" viewBox="0 0 12 12"><path d="M9 0.5L11.5 3L4 10.5L1.5 8Z" fill="#fff"/><path d="M1 9L3 11L0.5 11.5Z" fill="#fff"/></svg>
<div class="a" style="left:1323px;top:629px;font-size:13px;line-height:19px;color:#fff">操作</div>
<svg class="a" style="left:1348px;top:638px" width="7" height="4" viewBox="0 0 7 4"><path d="M0 0H7L3.5 4Z" fill="#fff"/></svg>
<div class="a" style="left:505px;top:668px;width:12px;height:12px;border:1px solid #a3a3a3;border-radius:2px;background:linear-gradient(#ececec,#d2d2d2)"></div>
<div class="a" style="left:508.0px;top:666px;width:200px;text-align:center;font-size:14px;line-height:20px;color:#4a525d;white-space:nowrap;letter-spacing:0.5px;">youbangdemo-00007</div>
<div class="a" style="left:642.5px;top:666px;width:200px;text-align:center;font-size:14px;line-height:20px;color:#4a525d;white-space:nowrap;">戴尔主机004</div>
<div class="a" style="left:747.5px;top:666px;width:200px;text-align:center;font-size:14px;line-height:20px;color:#4a525d;white-space:nowrap;">1101教室</div>
<div class="a" style="left:846.5px;top:666px;width:200px;text-align:center;font-size:14px;line-height:20px;color:#4a525d;white-space:nowrap;">台式机</div>
<div class="a" style="left:945.5px;top:666px;width:200px;text-align:center;font-size:14px;line-height:20px;color:#4a525d;white-space:nowrap;">戴尔</div>
<div class="a" style="left:1029.5px;top:666px;width:200px;text-align:center;font-size:14px;line-height:20px;color:#4a525d;white-space:nowrap;">是</div>
<div class="a" style="left:1130.0px;top:666px;width:200px;text-align:center;font-size:14px;line-height:20px;color:#4a525d;white-space:nowrap;letter-spacing:0.15px;">2017-07-18 12:20</div>
<div class="a" style="left:1306px;top:667px;width:56px;height:21px;background:#5b9be2;border:1px solid #4d8bd4"></div>
<svg class="a" style="left:1311px;top:671px" width="12" height="12" viewBox="0 0 12 12"><path d="M9 0.5L11.5 3L4 10.5L1.5 8Z" fill="#fff"/><path d="M1 9L3 11L0.5 11.5Z" fill="#fff"/></svg>
<div class="a" style="left:1323px;top:668px;font-size:13px;line-height:19px;color:#fff">操作</div>
<svg class="a" style="left:1348px;top:677px" width="7" height="4" viewBox="0 0 7 4"><path d="M0 0H7L3.5 4Z" fill="#fff"/></svg>

<!-- footer -->
<div class="a" style="left:493px;top:714px;font-size:14px;line-height:20px;color:#333;white-space:nowrap;letter-spacing:0.1px">显示第 <span style="color:#666">1</span> 到第 <span style="color:#666">10</span> 条记录，总共 <span style="color:#666">16</span> 条记录 每页显示</div>
<div class="a" style="left:818px;top:708px;width:54px;height:34px;border:1px solid #ccc;font-size:14px;line-height:32px;color:#333;padding-left:13px">10</div>
<svg class="a" style="left:850px;top:723px" width="9" height="5" viewBox="0 0 9 5"><path d="M0.5 4.5L4.5 0.5L8.5 4.5Z" fill="#333"/></svg>
<div class="a" style="left:875px;top:714px;font-size:14px;line-height:20px;color:#333">条记录</div>
</body>
</html>
